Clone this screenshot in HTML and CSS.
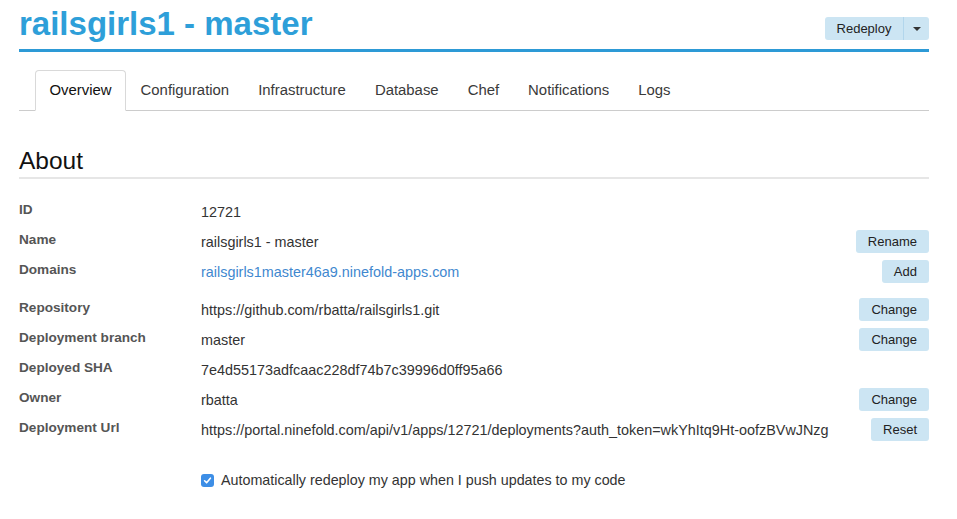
FILE: index.html
```html
<!DOCTYPE html>
<html>
<head>
<meta charset="utf-8">
<title>railsgirls1 - master</title>
<link rel="stylesheet" href="styles.css">
</head>
<body>
<div class="page">
  <header class="header">
    <h1 class="title">railsgirls1 - master</h1>
    <div class="btn-group">
      <button class="btn btn-main">Redeploy</button>
      <button class="btn btn-caret"><span class="caret"></span></button>
    </div>
  </header>

  <ul class="tabs">
    <li><a class="tab active">Overview</a></li>
    <li><a class="tab">Configuration</a></li>
    <li><a class="tab">Infrastructure</a></li>
    <li><a class="tab">Database</a></li>
    <li><a class="tab">Chef</a></li>
    <li><a class="tab">Notifications</a></li>
    <li><a class="tab">Logs</a></li>
  </ul>

  <h2 class="section-title">About</h2>

  <div class="rows">
    <div class="row"><span class="label">ID</span><span class="value">12721</span></div>
    <div class="row"><span class="label">Name</span><span class="value">railsgirls1 - master</span><button class="btn">Rename</button></div>
    <div class="row row-gap"><span class="label">Domains</span><span class="value"><a class="link">railsgirls1master46a9.ninefold-apps.com</a></span><button class="btn">Add</button></div>
    <div class="row"><span class="label">Repository</span><span class="value">https://github.com/rbatta/railsgirls1.git</span><button class="btn">Change</button></div>
    <div class="row"><span class="label">Deployment branch</span><span class="value">master</span><button class="btn">Change</button></div>
    <div class="row"><span class="label">Deployed SHA</span><span class="value">7e4d55173adfcaac228df74b7c39996d0ff95a66</span></div>
    <div class="row"><span class="label">Owner</span><span class="value">rbatta</span><button class="btn">Change</button></div>
    <div class="row"><span class="label">Deployment Url</span><span class="value">https://portal.ninefold.com/api/v1/apps/12721/deployments?auth_token=wkYhItq9Ht-oofzBVwJNzg</span><button class="btn">Reset</button></div>
  </div>

  <label class="auto">
    <span class="checkbox"><svg width="13" height="13" viewBox="0 0 13 13"><rect x="0" y="0" width="13" height="13" rx="3" fill="#3d8ee6"/><path d="M3.6 6.8 L5.6 8.8 L9.4 4.2" fill="none" stroke="#fff" stroke-width="1.6" stroke-linecap="round" stroke-linejoin="round"/></svg></span>
    <span class="auto-text">Automatically redeploy my app when I push updates to my code</span>
  </label>
</div>
</body>
</html>
```

FILE: styles.css
```css
* { box-sizing: border-box; }

body {
  margin: 0;
  background: #fff;
  font-family: "Liberation Sans", Arial, Helvetica, sans-serif;
  color: #333;
}

.page {
  width: 910px;
  margin-left: 19px;
}

.header {
  display: flex;
  justify-content: space-between;
  align-items: flex-start;
  padding-top: 4px;
  padding-bottom: 5px;
  border-bottom: 3px solid #2d9ad6;
}

.title {
  margin: 0;
  font-size: 33px;
  line-height: 40px;
  font-weight: bold;
  color: #2e9fd9;
}

.btn-group {
  display: flex;
  margin-top: 13px;
}

.btn {
  font-family: "Liberation Sans", Arial, Helvetica, sans-serif;
  font-size: 13px;
  color: #222;
  background: #cce5f3;
  border: none;
  border-radius: 3px;
  height: 23px;
  padding: 0 12px;
  line-height: 23px;
  cursor: pointer;
}

.btn-main {
  width: 79px;
  padding: 0;
  border-radius: 3px 0 0 3px;
  border-right: 1px solid #b2d6ec;
}

.btn-caret {
  width: 25px;
  padding: 0;
  border-radius: 0 3px 3px 0;
  display: flex;
  align-items: center;
  justify-content: center;
}

.caret {
  width: 0;
  height: 0;
  border-left: 4px solid transparent;
  border-right: 4px solid transparent;
  border-top: 4px solid #333;
}

.tabs {
  list-style: none;
  margin: 18px 0 0 0;
  padding: 0 0 0 16px;
  display: flex;
  border-bottom: 1px solid #cccccc;
}

.tab {
  display: block;
  padding: 0 13.5px;
  line-height: 39px;
  font-size: 14.9px;
  color: #3a3a3a;
  border: 1px solid transparent;
  border-radius: 4px 4px 0 0;
  margin-bottom: -1px;
}

.tab.active {
  color: #111;
  background: #fff;
  border-color: #d9d9d9 #d9d9d9 #fff #d9d9d9;
}

.section-title {
  margin: 36px 0 0 0;
  font-size: 24.5px;
  line-height: 28px;
  font-weight: normal;
  color: #111;
  padding-bottom: 2px;
  border-bottom: 2px solid #e6e6e6;
}

.rows {
  margin-top: 17px;
}

.row {
  display: grid;
  grid-template-columns: 182px 1fr auto;
  align-items: center;
  height: 30px;
}

.row-gap {
  margin-bottom: 8px;
}

.label {
  font-size: 13.6px;
  font-weight: bold;
  color: #555;
  line-height: 20px;
  margin-bottom: 2px;
}

.value {
  font-size: 14.4px;
  color: #333;
  line-height: 20px;
  padding-top: 2px;
  white-space: nowrap;
}

.link {
  color: #3f88cf;
  text-decoration: none;
}

.auto {
  display: flex;
  align-items: center;
  gap: 7px;
  margin-top: 26px;
  padding-left: 182px;
  height: 20px;
}

.checkbox {
  display: flex;
  width: 13px;
  height: 13px;
}

.auto-text {
  font-size: 14.3px;
  color: #333;
}
```
